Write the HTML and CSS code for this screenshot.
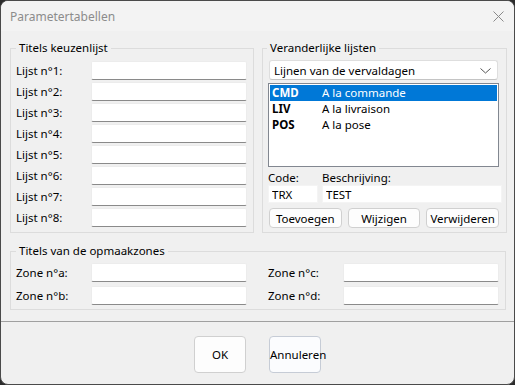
FILE: index.html
```html
<!DOCTYPE html>
<html lang="nl">
<head>
    <meta charset="UTF-8">
    <title>Parametertabellen</title>
    <link rel="stylesheet" href="styles.css">
</head>
<body>
    <div class="window">
        <div class="titlebar">
            <span class="title">Parametertabellen</span>
            <svg class="close" width="11" height="11" viewBox="0 0 11 11">
                <path d="M0.5 0.5 L10.5 10.5 M10.5 0.5 L0.5 10.5" stroke="#8a8a8a" stroke-width="1" fill="none"/>
            </svg>
        </div>

        <div class="content">
            <div class="top-row">
                <fieldset class="group">
                    <legend>Titels keuzenlijst</legend>
                    <div class="form-grid">
                        <label>Lijst n°1:</label><input class="field" type="text">
                        <label>Lijst n°2:</label><input class="field" type="text">
                        <label>Lijst n°3:</label><input class="field" type="text">
                        <label>Lijst n°4:</label><input class="field" type="text">
                        <label>Lijst n°5:</label><input class="field" type="text">
                        <label>Lijst n°6:</label><input class="field" type="text">
                        <label>Lijst n°7:</label><input class="field" type="text">
                        <label>Lijst n°8:</label><input class="field" type="text">
                    </div>
                </fieldset>

                <fieldset class="group variables">
                    <legend>Veranderlijke lijsten</legend>
                    <div class="combo">
                        <span>Lijnen van de vervaldagen</span>
                        <svg width="11" height="6" viewBox="0 0 11 6">
                            <path d="M0.5 0.5 L5.5 5 L10.5 0.5" stroke="#555" stroke-width="1" fill="none"/>
                        </svg>
                    </div>
                    <ul class="listbox">
                        <li class="selected"><b>CMD</b><span>A la commande</span></li>
                        <li><b>LIV</b><span>A la livraison</span></li>
                        <li><b>POS</b><span>A la pose</span></li>
                    </ul>
                    <div class="edit-row">
                        <label>Code:</label>
                        <label>Beschrijving:</label>
                        <input class="box" type="text" value="TRX">
                        <input class="box" type="text" value="TEST">
                    </div>
                    <div class="actions">
                        <button class="btn">Toevoegen</button>
                        <button class="btn">Wijzigen</button>
                        <button class="btn">Verwijderen</button>
                    </div>
                </fieldset>
            </div>

            <fieldset class="group zones">
                <legend>Titels van de opmaakzones</legend>
                <div class="zone-grid">
                    <div class="form-grid">
                        <label>Zone n°a:</label><input class="field" type="text">
                        <label>Zone n°b:</label><input class="field" type="text">
                    </div>
                    <div class="form-grid">
                        <label>Zone n°c:</label><input class="field" type="text">
                        <label>Zone n°d:</label><input class="field" type="text">
                    </div>
                </div>
            </fieldset>
        </div>

        <div class="footer">
            <button class="dlg-btn">OK</button>
            <button class="dlg-btn default">Annuleren</button>
        </div>
    </div>
</body>
</html>
```

FILE: styles.css
```css
html {
    background-color: #2b2b2b;
}
body {
    margin: 0;
    font-family: "Noto Sans", Arial, sans-serif;
    font-size: 11.5px;
    color: #000;
}
.window {
    box-sizing: border-box;
    width: 515px;
    height: 385px;
    background-color: #f0f0f0;
    border: 1px solid #4a4a4a;
    border-radius: 8px;
    overflow: hidden;
    display: flex;
    flex-direction: column;
}
.titlebar {
    height: 30px;
    flex: none;
    background-color: #f3f3f3;
    display: flex;
    align-items: center;
    justify-content: space-between;
    padding: 0 10px 0 9px;
}
.title {
    color: #8c8c8c;
    font-size: 12px;
}
.content {
    padding: 9px 8px 11px 9px;
}
.top-row {
    display: grid;
    grid-template-columns: 244px 245px;
    gap: 8px;
}
.group {
    margin: 0;
    padding: 5px 6px 5px 5px;
    border: 1px solid #dcdcdc;
    min-width: 0;
}
.group legend {
    padding: 0 3px;
    line-height: 16px;
}
.form-grid {
    display: grid;
    grid-template-columns: 75px 156px;
    row-gap: 2px;
    align-items: center;
}
.form-grid label {
    line-height: 19px;
}
.field {
    box-sizing: border-box;
    height: 19px;
    margin: 0;
    border: 1px solid #ececec;
    border-bottom-color: #8a8a8a;
    border-radius: 2px;
    background: #fff;
    font: inherit;
}

.variables {
    padding: 4px 7px 4px 5px;
}
.variables legend {
    margin-left: -1px;
}
.combo {
    box-sizing: border-box;
    height: 20px;
    margin-left: 1px;
    margin-right: 1px;
    display: flex;
    align-items: center;
    justify-content: space-between;
    padding: 0 6px 0 4px;
    background: #fff;
    border: 1px solid #dedede;
    border-bottom-color: #c4c4c4;
    border-radius: 3px;
}
.combo svg {
    margin-top: 1px;
}
.listbox {
    box-sizing: border-box;
    height: 84px;
    margin: 3px 0 0;
    padding: 1px;
    list-style: none;
    background: #fff;
    border: 1px solid #828790;
}
.listbox li {
    display: flex;
    height: 16px;
    line-height: 16px;
    padding-left: 2px;
}
.listbox li b {
    width: 50px;
}
.listbox li.selected {
    background-color: #0078d7;
    color: #fff;
}
.edit-row {
    display: grid;
    grid-template-columns: 50px 1fr;
    column-gap: 4px;
    margin-top: 3px;
}
.edit-row label {
    line-height: 15px;
}
.box {
    box-sizing: border-box;
    height: 18px;
    margin: 0;
    padding: 0 3px;
    border: 1px solid #f4f4f4;
    background: #fff;
    font: inherit;
}
.actions {
    display: grid;
    grid-template-columns: 1fr 1fr 1fr;
    gap: 6px;
    margin-top: 5px;
    padding-left: 1px;
}
.btn {
    height: 20px;
    padding: 0;
    background-color: #fdfdfd;
    border: 1px solid #d0d0d0;
    border-radius: 4px;
    font: inherit;
    color: #000;
}

.zones {
    margin-top: 10px;
    padding: 4px 7px 4px 5px;
}
.zone-grid {
    display: grid;
    grid-template-columns: 231px 231px;
    column-gap: 21px;
}
.zones .form-grid {
    row-gap: 4px;
}

.footer {
    flex: 1;
    border-top: 1px solid #a0a0a0;
    display: flex;
    justify-content: center;
    align-items: flex-start;
    gap: 23px;
    padding-top: 14px;
}
.dlg-btn {
    width: 52px;
    height: 37px;
    padding: 0;
    background-color: #fdfdfd;
    border: 1px solid #d0d0d0;
    border-radius: 4px;
    font: inherit;
    color: #000;
    white-space: nowrap;
}
.dlg-btn.default {
    background-color: #fbfcfe;
    border-color: #c6ccd6;
}
```
